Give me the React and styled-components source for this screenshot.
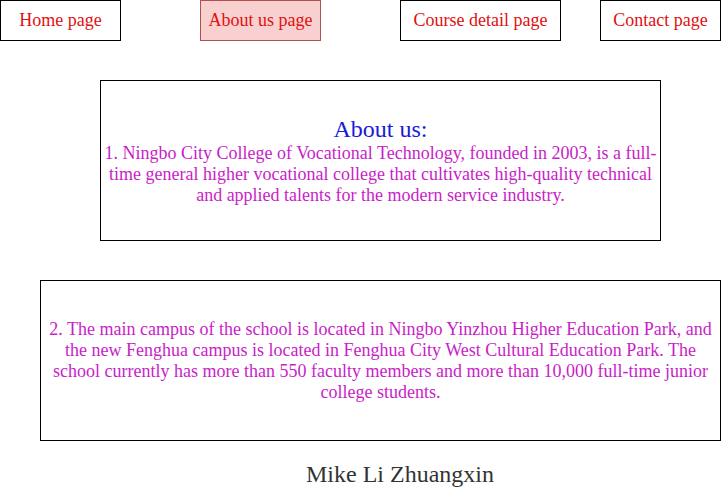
import React from 'react'
import styled, { createGlobalStyle } from 'styled-components'

const GlobalStyle = createGlobalStyle`
    body {
        margin: 0;
        background: #fff;
        font-family: "Liberation Serif", "Times New Roman", serif;
        overflow: hidden;
    }
`

const links = [
    { label: 'Home page', width: 120 },
    { label: 'About us page', width: 120, active: true },
    { label: 'Course detail page', width: 160 },
    { label: 'Contact page', width: 120 },
]

function App() {
    return (
        <Page>
            <GlobalStyle />
            <Nav>
                {links.map((l) => (
                    <NavItem key={l.label} $w={l.width} $active={l.active}>
                        {l.label}
                    </NavItem>
                ))}
            </Nav>

            <Box $left={100} $width={560}>
                <Heading>About us:</Heading>
                <Text>
                    1. Ningbo City College of Vocational Technology, founded in 2003, is a full-time general higher vocational college that cultivates high-quality technical and applied talents for the modern service industry.
                </Text>
            </Box>

            <Box $left={40} $width={680}>
                <Text>
                    2. The main campus of the school is located in Ningbo Yinzhou Higher Education Park, and the new Fenghua campus is located in Fenghua City West Cultural Education Park. The school currently has more than 550 faculty members and more than 10,000 full-time junior college students.
                </Text>
            </Box>

            <Footer>Mike Li Zhuangxin</Footer>
        </Page>
    )
}

export default App

const Page = styled.div`
    display: flex;
    flex-direction: column;
    width: 721px;
`

const Nav = styled.div`
    display: grid;
    grid-template-columns: repeat(3, 200px) 121px;
    align-items: start;
`

const NavItem = styled.div`
    box-sizing: border-box;
    width: ${({ $w }) => $w + 1}px;
    height: 41px;
    display: flex;
    align-items: center;
    justify-content: center;
    font-size: 18px;
    color: #e01010;
    border: 1px solid ${({ $active }) => ($active ? '#b05050' : '#000')};
    background: ${({ $active }) => ($active ? '#f9d0d0' : '#fff')};
    cursor: pointer;
`

const Box = styled.div`
    box-sizing: border-box;
    margin: 39px 0 0 ${({ $left }) => $left}px;
    width: ${({ $width }) => $width + 1}px;
    height: 161px;
    border: 1px solid #000;
    display: flex;
    flex-direction: column;
    align-items: center;
    justify-content: center;
    padding: 0 3px;
`

const Heading = styled.div`
    font-size: 24px;
    color: #1a1ad8;
`

const Text = styled.p`
    margin: 0;
    font-size: 18px;
    color: #c81ec8;
    text-align: center;
`

const Footer = styled.div`
    margin-top: 20px;
    padding-left: 79px;
    text-align: center;
    font-size: 24px;
    color: #333;
`
